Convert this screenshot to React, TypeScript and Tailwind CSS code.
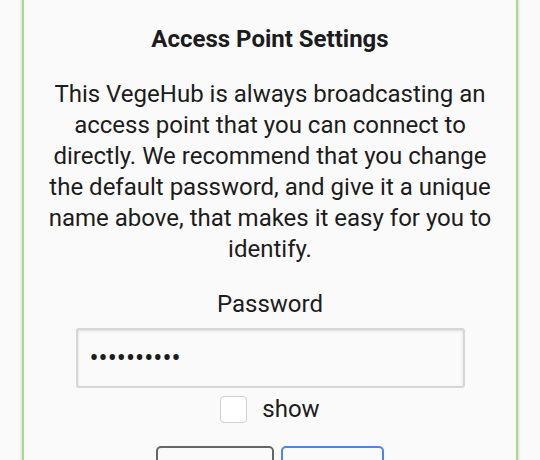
import React, { useState } from "react";

export default function App() {
  const [show, setShow] = useState(false);
  const [password, setPassword] = useState("vegetronix");

  return (
    <div
      className="min-h-[460px] bg-[#fafafa] text-[#1c1c1c] px-[22px]"
      style={{ fontFamily: "Roboto, 'Noto Sans', sans-serif" }}
    >
      <div className="border-x-2 border-b-2 border-[#a9d88f] shadow-[0_0_2px_1px_rgba(0,0,0,0.12)] bg-[#fafafa] flex flex-col items-center pt-[25px] pb-10 px-6">
        <h2 className="text-[24px] leading-[28px] font-bold">Access Point Settings</h2>
        <p className="mt-[26px] text-[24px] leading-[31px] text-center">
          This VegeHub is always broadcasting an access point that you can connect to
          directly. We recommend that you change the default password, and give it a
          unique name above, that makes it easy for you to identify.
        </p>
        <label className="mt-[24px] text-[24px] leading-[31px]">Password</label>
        <input
          type={show ? "text" : "password"}
          value={password}
          onChange={(e) => setPassword(e.target.value)}
          className="mt-[8px] w-[389px] h-[60px] pl-[12px] pr-[5px] rounded-[3px] border-2 border-[#d6d6d6] bg-[#fafafa] shadow-[inset_0_1px_3px_rgba(0,0,0,0.12)] text-[27px] outline-none"
        />
        <label className="mt-2 flex items-center gap-[15px] text-[24px] leading-[27px]">
          <input
            type="checkbox"
            checked={show}
            onChange={(e) => setShow(e.target.checked)}
            className="appearance-none w-[27px] h-[27px] rounded-[4px] border border-[#cfcfcf] bg-white"
          />
          show
        </label>
        <div className="mt-[23px] flex gap-[7px]">
          <button className="w-[118px] h-[62px] rounded-[5px] border-2 border-[#666] bg-[#fafafa] text-[24px]">
            Cancel
          </button>
          <button className="w-[103px] h-[62px] rounded-[5px] border-2 border-[#4a86e8] bg-[#fafafa] text-[24px]">
            Save
          </button>
        </div>
      </div>
    </div>
  );
}
